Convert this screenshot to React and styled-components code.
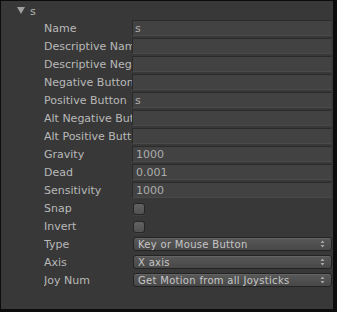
import React from "react";
import styled, { createGlobalStyle } from "styled-components";

const Global = createGlobalStyle`
  html, body { margin: 0; padding: 0; background: #000; }
  body { font-family: "DejaVu Sans", "Liberation Sans", sans-serif; }
`;

const Frame = styled.div`
  width: 337px;
  height: 312px;
  box-sizing: border-box;
  background: #0c0c0c;
  padding: 1px 4px 3px 1px;
`;

const Panel = styled.div`
  height: 100%;
  background: #383838;
  box-sizing: border-box;
  padding: 1px 1px 0 0;
  display: flex;
  flex-direction: column;
`;

const Header = styled.div`
  height: 18px;
  display: flex;
  align-items: center;
  padding-left: 16px;
  gap: 5px;
  font-size: 11px;
  color: #b4b4b4;
`;

const Triangle = styled.span`
  width: 0;
  height: 0;
  border-left: 4px solid transparent;
  border-right: 4px solid transparent;
  border-top: 7px solid #a0a0a0;
  margin-top: -1px;
`;

const Row = styled.div`
  height: 18px;
  display: grid;
  grid-template-columns: 88px 1fr;
  padding-left: 43px;
`;

const Label = styled.div`
  height: 16px;
  line-height: 17px;
  font-size: 11px;
  color: #b8b8b8;
  white-space: nowrap;
  overflow: hidden;
`;

const Field = styled.div`
  height: 16px;
  box-sizing: border-box;
  background: #424242;
  border: 1px solid #2a2a2a;
  border-bottom-color: #4a4a4a;
  border-right-color: #3c3c3c;
  font-size: 11px;
  line-height: 15px;
  color: #adadad;
  padding-left: ${(p) => (p.$num ? 3 : 2)}px;
  white-space: nowrap;
  overflow: hidden;
`;

const CheckCell = styled.div`
  height: 16px;
  display: flex;
  align-items: flex-start;
  padding: 3px 0 0 1px;
  box-sizing: border-box;
`;

const Checkbox = styled.div`
  width: 12px;
  height: 12px;
  box-sizing: border-box;
  border-radius: 3px;
  border: 1px solid #262626;
  background: linear-gradient(#626262, #515151);
  box-shadow: 0 1px 0 rgba(255, 255, 255, 0.06);
`;

const Select = styled.div`
  margin: 1px 0 1px 1px;
  height: 14px;
  box-sizing: border-box;
  border-radius: 3px;
  border: 1px solid #232323;
  background: linear-gradient(#585858, #484848);
  box-shadow: inset 0 1px 0 rgba(255, 255, 255, 0.08);
  display: flex;
  align-items: center;
  justify-content: space-between;
  padding: 0 6px 0 4px;
  font-size: 10px;
  color: #c6c6c6;
  letter-spacing: 0.3px;
  white-space: nowrap;
`;

const Arrows = styled.svg`
  flex: none;
`;

const UpDown = () => (
  <Arrows width="5" height="8" viewBox="0 0 5 8">
    <path d="M2.5 0.5 L4.5 3 L0.5 3 Z" fill="#a8a8a8" />
    <path d="M0.5 5 L4.5 5 L2.5 7.5 Z" fill="#a8a8a8" />
  </Arrows>
);

const rows = [
  { label: "Name", type: "text", value: "s" },
  { label: "Descriptive Name", type: "text", value: "" },
  { label: "Descriptive Negative Name", type: "text", value: "" },
  { label: "Negative Button", type: "text", value: "" },
  { label: "Positive Button", type: "text", value: "s" },
  { label: "Alt Negative Button", type: "text", value: "" },
  { label: "Alt Positive Button", type: "text", value: "" },
  { label: "Gravity", type: "num", value: "1000" },
  { label: "Dead", type: "num", value: "0.001" },
  { label: "Sensitivity", type: "num", value: "1000" },
  { label: "Snap", type: "check" },
  { label: "Invert", type: "check" },
  { label: "Type", type: "select", value: "Key or Mouse Button" },
  { label: "Axis", type: "select", value: "X axis" },
  { label: "Joy Num", type: "select", value: "Get Motion from all Joysticks" },
];

export default function App() {
  return (
    <>
      <Global />
      <Frame>
        <Panel>
          <Header>
            <Triangle />
            <span>s</span>
          </Header>
          {rows.map((r) => (
            <Row key={r.label}>
              <Label title={r.label}>{r.label}</Label>
              {r.type === "check" ? (
                <CheckCell>
                  <Checkbox />
                </CheckCell>
              ) : r.type === "select" ? (
                <Select>
                  <span>{r.value}</span>
                  <UpDown />
                </Select>
              ) : (
                <Field $num={r.type === "num"}>{r.value}</Field>
              )}
            </Row>
          ))}
        </Panel>
      </Frame>
    </>
  );
}
